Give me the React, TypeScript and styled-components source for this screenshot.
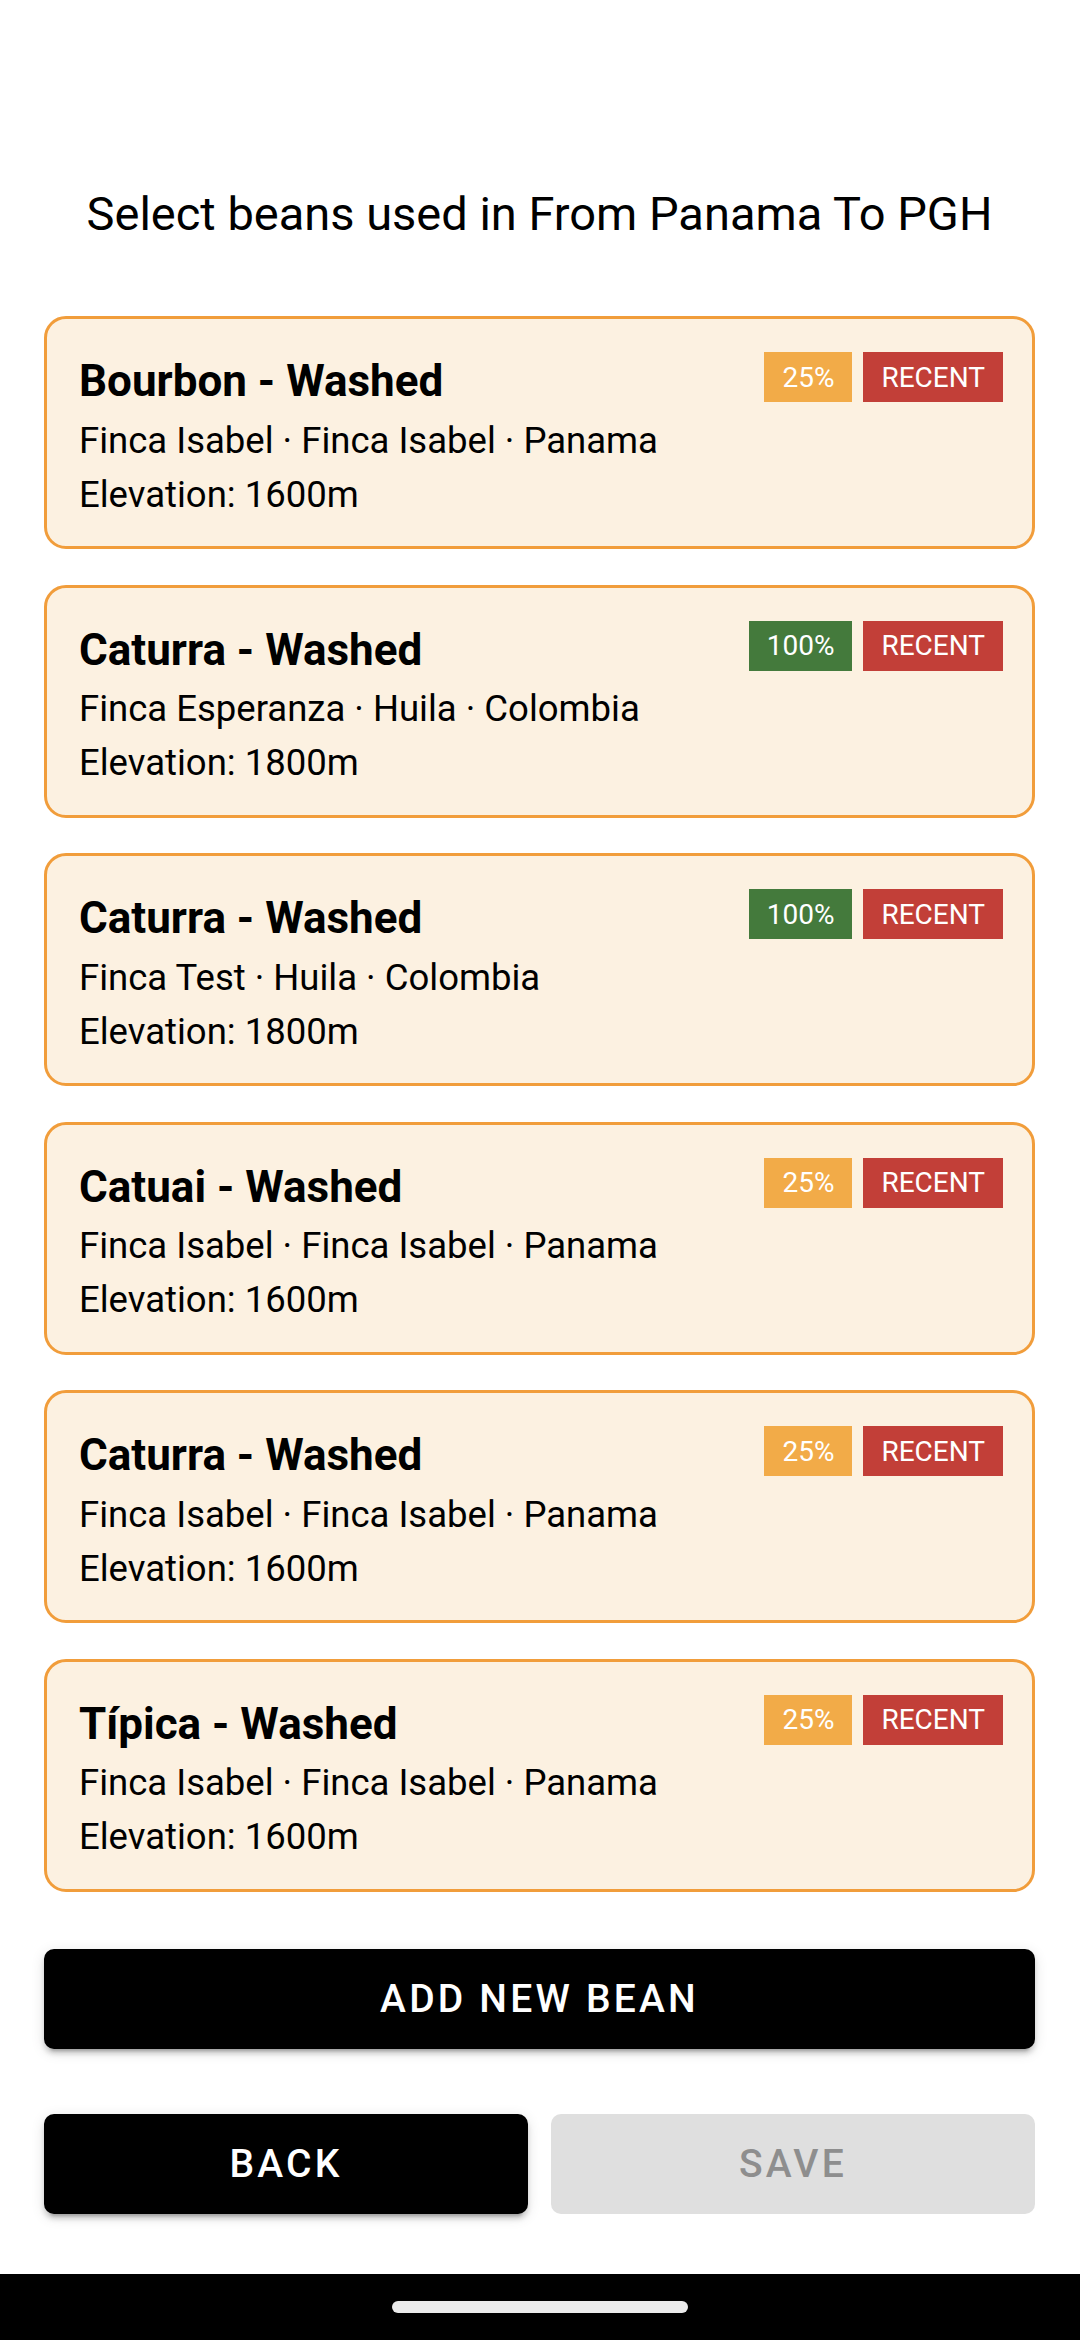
import React from "react";
import styled, { createGlobalStyle } from "styled-components";

const GlobalStyle = createGlobalStyle`
  html, body {
    margin: 0;
    padding: 0;
    background: #ffffff;
  }
  * { box-sizing: border-box; }
`;

const Screen = styled.div`
  width: 1080px;
  height: 2340px;
  display: flex;
  flex-direction: column;
  background: #ffffff;
  font-family: Roboto, "Noto Sans", Arial, sans-serif;
  color: #000000;
  overflow: hidden;
`;

const Content = styled.main`
  flex: 1;
  display: flex;
  flex-direction: column;
  padding: 186px 45px 0 44px;
`;

const Heading = styled.h1`
  margin: 0;
  font-size: 47px;
  line-height: 56px;
  font-weight: 400;
  text-align: center;
  letter-spacing: 0;
`;

const CardList = styled.div`
  display: flex;
  flex-direction: column;
  gap: 35.5px;
  margin-top: 74px;
`;

const Card = styled.div`
  height: 233px;
  border: 3px solid #f19d3b;
  border-radius: 22px;
  background: #fcf1e1;
  padding: 33px 29px 0 32px;
  display: flex;
  flex-direction: column;
`;

const TitleRow = styled.div`
  display: flex;
  align-items: flex-start;
  justify-content: space-between;
`;

const Title = styled.div`
  font-size: 44px;
  line-height: 52px;
  font-weight: 700;
  padding-top: 3px;
`;

const Badges = styled.div`
  display: flex;
  gap: 11px;
`;

const Badge = styled.span<{ $tone: "orange" | "green" | "red" }>`
  height: 50px;
  padding: 0 18px;
  display: inline-flex;
  align-items: center;
  justify-content: center;
  font-size: 28px;
  font-weight: 400;
  color: #ffffff;
  background: ${(p) =>
    p.$tone === "orange" ? "#f2ab48" : p.$tone === "green" ? "#447a3c" : "#c23f38"};
`;

const InfoLine = styled.div`
  font-size: 36.5px;
  line-height: 54px;
  font-weight: 400;
`;

const Origin = styled(InfoLine)`
  margin-top: 6.5px;
`;

const PrimaryButton = styled.button<{ $disabled?: boolean }>`
  height: 100px;
  border: none;
  border-radius: 10px;
  font-family: Roboto, "Noto Sans", Arial, sans-serif;
  font-size: 39px;
  font-weight: 500;
  letter-spacing: 3.2px;
  text-transform: uppercase;
  background: ${(p) => (p.$disabled ? "#dfdfdf" : "#000000")};
  color: ${(p) => (p.$disabled ? "#8e8e8e" : "#ffffff")};
  box-shadow: ${(p) =>
    p.$disabled
      ? "none"
      : "0 8px 3px -6px rgba(0,0,0,0.2), 0 5px 5px 0 rgba(0,0,0,0.14), 0 3px 14px 0 rgba(0,0,0,0.12)"};
  padding: 0;
`;

const AddButton = styled(PrimaryButton)`
  margin-top: 57px;
  width: 100%;
`;

const ButtonRow = styled.div`
  margin-top: 65px;
  display: grid;
  grid-template-columns: 1fr 1fr;
  gap: 23px;
`;

const NavBar = styled.div`
  height: 66px;
  background: #000000;
  display: flex;
  align-items: center;
  justify-content: center;
`;

const Handle = styled.div`
  width: 296px;
  height: 12px;
  border-radius: 6px;
  background: #ebebeb;
`;

type Bean = {
  name: string;
  origin: string;
  elevation: string;
  pct: string;
  tone: "orange" | "green";
};

const beans: Bean[] = [
  { name: "Bourbon - Washed", origin: "Finca Isabel · Finca Isabel · Panama", elevation: "1600m", pct: "25%", tone: "orange" },
  { name: "Caturra - Washed", origin: "Finca Esperanza · Huila · Colombia", elevation: "1800m", pct: "100%", tone: "green" },
  { name: "Caturra - Washed", origin: "Finca Test · Huila · Colombia", elevation: "1800m", pct: "100%", tone: "green" },
  { name: "Catuai - Washed", origin: "Finca Isabel · Finca Isabel · Panama", elevation: "1600m", pct: "25%", tone: "orange" },
  { name: "Caturra - Washed", origin: "Finca Isabel · Finca Isabel · Panama", elevation: "1600m", pct: "25%", tone: "orange" },
  { name: "Típica - Washed", origin: "Finca Isabel · Finca Isabel · Panama", elevation: "1600m", pct: "25%", tone: "orange" },
];

export default function App() {
  return (
    <>
      <GlobalStyle />
      <Screen>
        <Content>
          <Heading>Select beans used in From Panama To PGH</Heading>
          <CardList>
            {beans.map((b, i) => (
              <Card key={i}>
                <TitleRow>
                  <Title>{b.name}</Title>
                  <Badges>
                    <Badge $tone={b.tone}>{b.pct}</Badge>
                    <Badge $tone="red">RECENT</Badge>
                  </Badges>
                </TitleRow>
                <Origin>{b.origin}</Origin>
                <InfoLine>Elevation: {b.elevation}</InfoLine>
              </Card>
            ))}
          </CardList>
          <AddButton>Add new bean</AddButton>
          <ButtonRow>
            <PrimaryButton>Back</PrimaryButton>
            <PrimaryButton $disabled>Save</PrimaryButton>
          </ButtonRow>
        </Content>
        <NavBar>
          <Handle />
        </NavBar>
      </Screen>
    </>
  );
}
